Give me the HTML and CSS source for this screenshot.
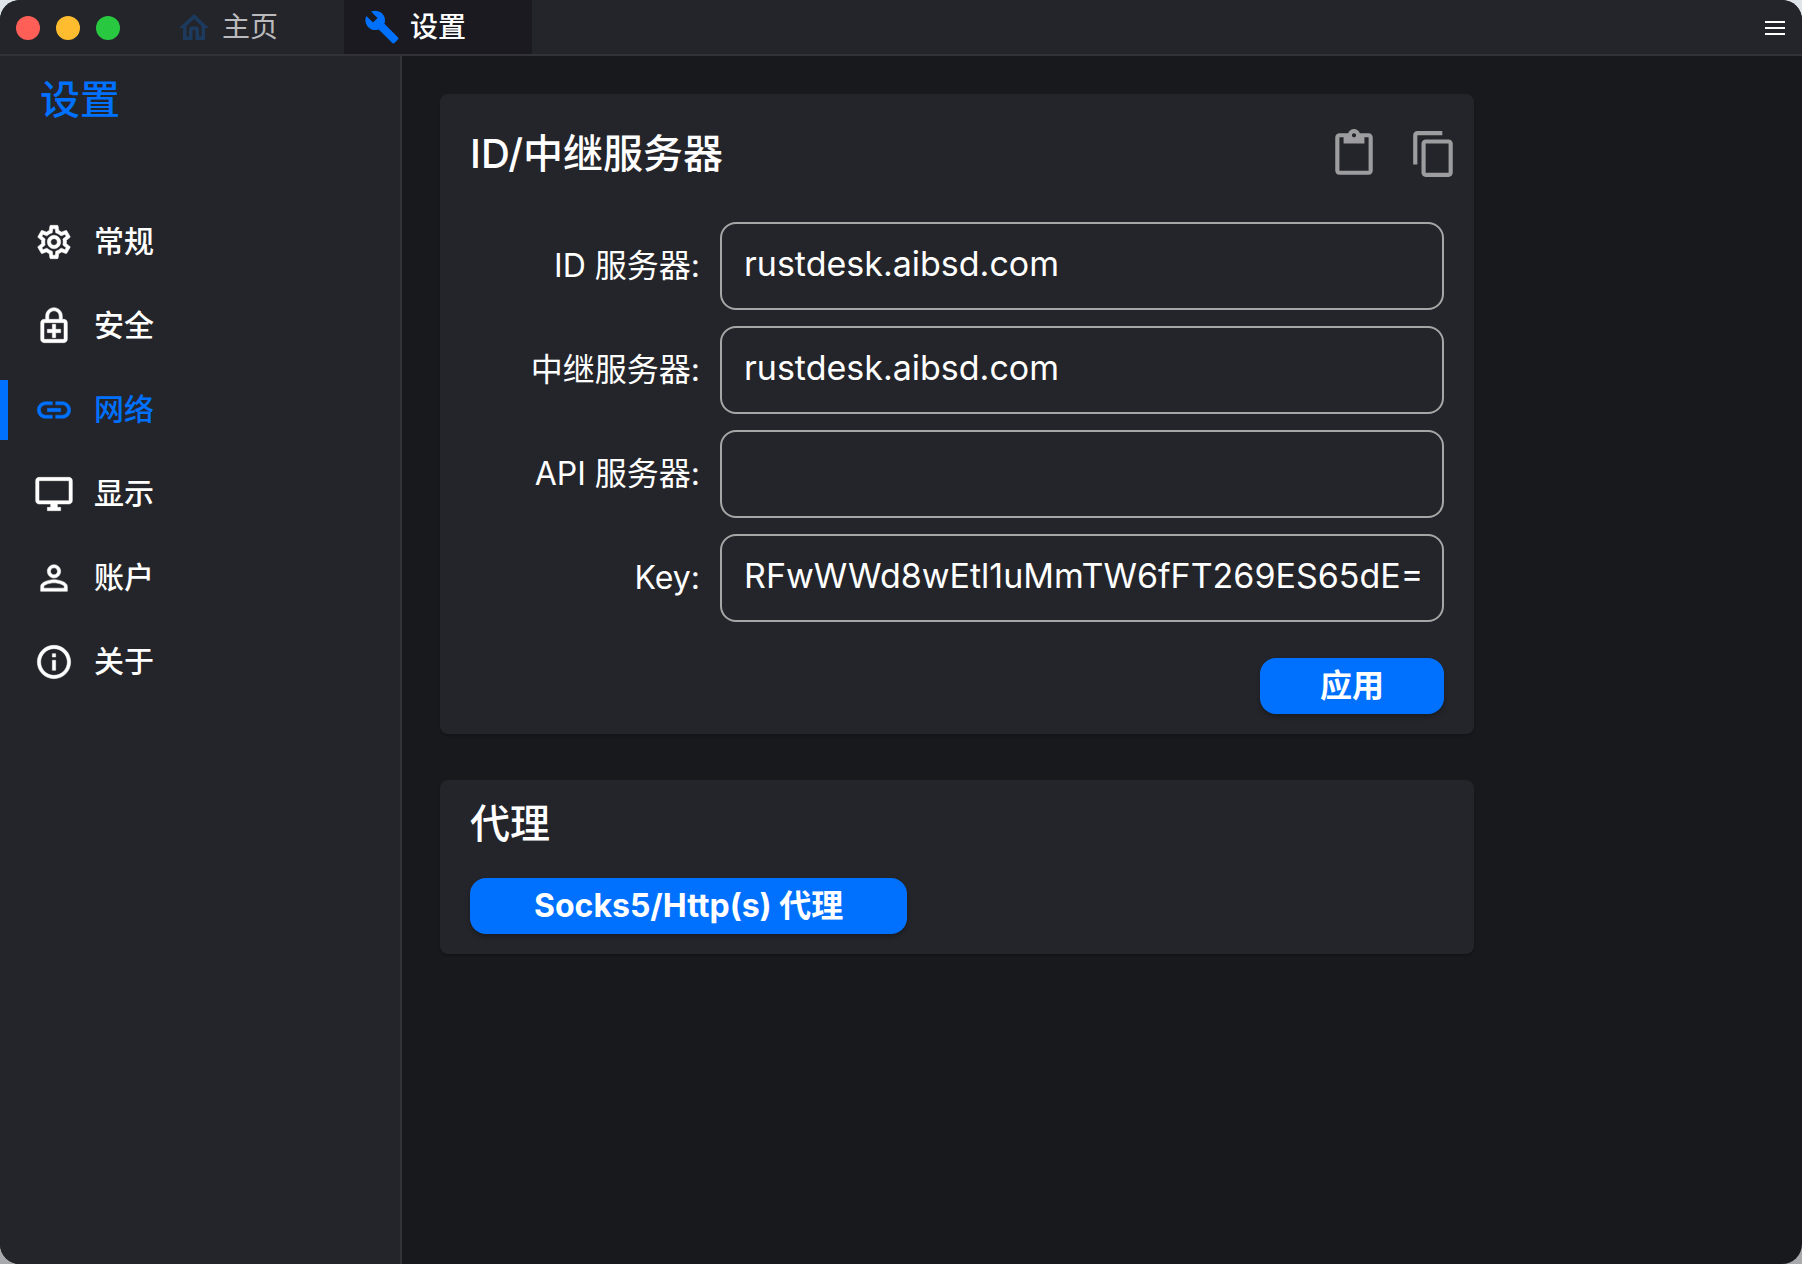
FILE: index.html
```
<!DOCTYPE html>
<html lang="zh-CN">
<head>
  <meta charset="UTF-8">
  <meta name="viewport" content="width=device-width, initial-scale=1">
  <title>设置</title>
  <link rel="stylesheet" href="styles.css">
</head>
<body>
  <div class="window">
    <header class="titlebar">
      <div class="lights">
        <button class="light close" aria-label="关闭"></button>
        <button class="light minimize" aria-label="最小化"></button>
        <button class="light zoom" aria-label="缩放"></button>
      </div>
      <nav class="tabs">
        <a class="tab tab-home" href="#home">
          <svg class="home-icon" viewBox="0 0 30 26"><path d="M15 0 30 14H26V26H16.500V16h-3V26H4V14H0ZM15 5 7.500 12V22.500H10V15.500a3 3 0 0 1 3-3h4a3 3 0 0 1 3 3V22.500H22.500V12Z"/></svg>
          主页
        </a>
        <a class="tab active" href="#settings">
          <svg class="wrench-icon" viewBox="0 0 24 24"><path d="M22.700 19l-9.100-9.100c.9-2.300.4-5-1.500-6.900-2-2-5-2.400-7.400-1.300L9 6 6 9 1.600 4.700C.4 7.100.9 10.100 2.900 12.100c1.900 1.900 4.600 2.400 6.900 1.500l9.100 9.100c.4.4 1 .4 1.400 0l2.300-2.300c.5-.4.5-1.100.1-1.400z"/></svg>
          设置
        </a>
      </nav>
      <button class="menu-btn" aria-label="菜单"><span></span><span></span><span></span></button>
    </header>

    <div class="content">
      <aside class="sidebar">
        <h1>设置</h1>
        <nav class="side-nav">
          <a class="nav-item" href="#general">
            <svg viewBox="0 0 24 24"><path d="M19.430 12.980c.04-.32.07-.64.07-.98 0-.34-.03-.66-.07-.98l2.110-1.650c.19-.15.24-.42.12-.64l-2-3.460c-.09-.16-.26-.25-.44-.25-.06 0-.12.01-.17.03l-2.490 1c-.52-.4-1.080-.73-1.690-.98l-.38-2.650C14.460 2.180 14.250 2 14 2h-4c-.25 0-.46.18-.49.42l-.38 2.650c-.61.25-1.170.59-1.690.98l-2.490-1c-.06-.02-.12-.03-.18-.03-.17 0-.34.09-.43.25l-2 3.460c-.13.22-.07.49.12.64l2.110 1.650c-.04.32-.07.65-.07.98 0 .33.03.66.07.98l-2.110 1.650c-.19.15-.24.42-.12.64l2 3.460c.09.16.26.25.44.25.06 0 .12-.01.17-.03l2.490-1c.52.4 1.080.73 1.690.98l.38 2.650c.03.24.24.42.49.42h4c.25 0 .46-.18.49-.42l.38-2.650c.61-.25 1.170-.59 1.690-.98l2.490 1c.06.02.12.03.18.03.17 0 .34-.09.43-.25l2-3.460c.12-.22.07-.49-.12-.64l-2.110-1.650zm-1.980-1.710c.04.31.05.52.05.73 0 .21-.02.43-.05.73l-.14 1.130.89.7 1.080.84-.7 1.210-1.270-.51-1.040-.42-.9.680c-.43.32-.84.56-1.250.73l-1.060.43-.16 1.130-.2 1.350h-1.400l-.19-1.350-.16-1.130-1.060-.43c-.43-.18-.83-.41-1.230-.71l-.91-.7-1.060.43-1.270.51-.7-1.210 1.080-.84.89-.7-.14-1.130c-.03-.31-.05-.54-.05-.74s.02-.43.05-.73l.14-1.130-.89-.7-1.080-.84.7-1.210 1.270.51 1.040.42.9-.68c.43-.32.84-.56 1.250-.73l1.060-.43.16-1.130.2-1.350h1.390l.19 1.350.16 1.130 1.060.43c.43.18.83.41 1.230.71l.91.7 1.060-.43 1.270-.51.7 1.210-1.070.85-.89.7.14 1.130zM12 8c-2.210 0-4 1.790-4 4s1.790 4 4 4 4-1.790 4-4-1.790-4-4-4zm0 6c-1.100 0-2-.9-2-2s.9-2 2-2 2 .9 2 2-.9 2-2 2z"/></svg>
            常规
          </a>
          <a class="nav-item" href="#security">
            <svg viewBox="0 0 24 24"><path d="M18 8h-1V6c0-2.760-2.240-5-5-5S7 3.240 7 6v2H6c-1.100 0-2 .9-2 2v10c0 1.100.9 2 2 2h12c1.100 0 2-.9 2-2V10c0-1.100-.9-2-2-2zM8.900 6c0-1.710 1.390-3.100 3.100-3.100s3.100 1.390 3.100 3.100v2H8.900V6zM18 20H6V10h12v10zM11 19h2v-3h3v-2h-3v-3h-2v3H8v2h3z"/></svg>
            安全
          </a>
          <a class="nav-item active" href="#network">
            <svg viewBox="0 0 24 24"><path d="M3.900 12c0-1.710 1.390-3.100 3.100-3.100h4V7H7c-2.760 0-5 2.240-5 5s2.240 5 5 5h4v-1.900H7c-1.710 0-3.100-1.390-3.100-3.100zM8 13h8v-2H8v2zm9-6h-4v1.900h4c1.710 0 3.100 1.390 3.100 3.100s-1.390 3.100-3.100 3.100h-4V17h4c2.760 0 5-2.240 5-5s-2.240-5-5-5z"/></svg>
            网络
          </a>
          <a class="nav-item" href="#display">
            <svg viewBox="0 0 24 24"><path d="M21 2H3c-1.100 0-2 .9-2 2v12c0 1.100.9 2 2 2h7v2H8v2h8v-2h-2v-2h7c1.100 0 2-.9 2-2V4c0-1.100-.9-2-2-2zm0 14H3V4h18v12z"/></svg>
            显示
          </a>
          <a class="nav-item" href="#account">
            <svg viewBox="0 0 24 24"><path d="M12 5.900c1.160 0 2.100.94 2.100 2.100s-.94 2.100-2.100 2.100S9.900 9.160 9.900 8s.94-2.100 2.100-2.100m0 9c2.970 0 6.100 1.460 6.100 2.100v1.100H5.900V17c0-.64 3.130-2.100 6.100-2.100M12 4C9.790 4 8 5.790 8 8s1.790 4 4 4 4-1.790 4-4-1.790-4-4-4zm0 9c-2.670 0-8 1.340-8 4v3h16v-3c0-2.660-5.330-4-8-4z"/></svg>
            账户
          </a>
          <a class="nav-item" href="#about">
            <svg viewBox="0 0 24 24"><path d="M11 7h2v2h-2zm0 4h2v6h-2zm1-9C6.480 2 2 6.480 2 12s4.480 10 10 10 10-4.480 10-10S17.520 2 12 2zm0 18c-4.410 0-8-3.590-8-8s3.590-8 8-8 8 3.590 8 8-3.590 8-8 8z"/></svg>
            关于
          </a>
        </nav>
      </aside>

      <main class="main">
        <section class="card">
          <div class="card-head">
            <h2>ID/中继服务器</h2>
            <div class="actions">
              <button class="icon-btn" aria-label="粘贴">
                <svg viewBox="0 0 24 24"><path d="M19 2h-4.180C14.400.84 13.300 0 12 0c-1.300 0-2.400.84-2.820 2H5c-1.100 0-2 .9-2 2v16c0 1.100.9 2 2 2h14c1.100 0 2-.9 2-2V4c0-1.100-.9-2-2-2zm-7 0c.55 0 1 .45 1 1s-.45 1-1 1-1-.45-1-1 .45-1 1-1zm7 18H5V4h2v3h10V4h2v16z"/></svg>
              </button>
              <button class="icon-btn" aria-label="复制">
                <svg viewBox="0 0 24 24"><path d="M16 1H4c-1.100 0-2 .9-2 2v14h2V3h12V1zm3 4H8c-1.100 0-2 .9-2 2v14c0 1.100.9 2 2 2h11c1.100 0 2-.9 2-2V7c0-1.100-.9-2-2-2zm0 16H8V7h11v14z"/></svg>
              </button>
            </div>
          </div>
          <form class="server-form">
            <label for="idServer">ID 服务器:</label>
            <input type="text" id="idServer" value="rustdesk.aibsd.com">
            <label for="relayServer">中继服务器:</label>
            <input type="text" id="relayServer" value="rustdesk.aibsd.com">
            <label for="apiServer">API 服务器:</label>
            <input type="text" id="apiServer">
            <label for="key">Key:</label>
            <input type="text" id="key" value="RFwWWd8wEtl1uMmTW6fFT269ES65dE=">
            <button type="button" class="btn apply">应用</button>
          </form>
        </section>

        <section class="card proxy">
          <h2>代理</h2>
          <button type="button" class="btn">Socks5/Http(s) 代理</button>
        </section>
      </main>
    </div>
  </div>
</body>
</html>
```

FILE: styles.css
```
* {
  box-sizing: border-box;
}
body {
  margin: 0;
  background: linear-gradient(#dfe4ea, #a8a9ab);
  color: #fff;
  font-family: Inter, "Noto Sans CJK SC", sans-serif;
  font-size: 32px;
  line-height: 1.25;
}
a {
  color: inherit;
  text-decoration: none;
}
button, input {
  font: inherit;
  color: inherit;
}
button {
  border: none;
  padding: 0;
  background: none;
  cursor: pointer;
}
svg {
  display: block;
  flex: none;
  fill: currentColor;
}
h1, h2 {
  margin: 0;
  font-size: 40px;
  line-height: 56px;
  font-weight: 500;
}
.window {
  display: flex;
  flex-direction: column;
  min-height: 100vh;
  border-radius: 20px;
  overflow: hidden;
  background: #18191d;
}

/* title bar */
.titlebar {
  display: flex;
  align-items: stretch;
  height: 56px;
  padding: 0 17px 0 16px;
  background: #24252a;
  border-bottom: 2px solid #323338;
}
.lights {
  display: flex;
  align-items: center;
  gap: 16px;
  padding-top: 2px;
}
.light {
  width: 24px;
  height: 24px;
  border-radius: 50%;
}
.close {
  background: #ff5f57;
}
.minimize {
  background: #febc2e;
}
.zoom {
  background: #28c840;
}
.tabs {
  display: flex;
  margin-left: 36px;
}
.tab {
  display: flex;
  align-items: center;
  width: 188px;
  padding-left: 20px;
  gap: 10px;
  font-size: 28px;
}
.tab-home {
  gap: 13px;
  padding-left: 23px;
  color: #bbbbbd;
}
.tab.active {
  background: #1b1a20;
  font-weight: 500;
}
.home-icon {
  width: 30px;
  height: 26px;
  fill: #1c3a5e;
}
.wrench-icon {
  width: 36px;
  height: 36px;
  fill: #0071ff;
}
.menu-btn {
  display: flex;
  flex-direction: column;
  justify-content: center;
  gap: 4px;
  margin-left: auto;
  padding-top: 2px;
}
.menu-btn span {
  width: 20px;
  height: 2px;
  background: #fff;
}

/* sidebar */
.content {
  display: flex;
  flex: 1;
}
.sidebar {
  flex: none;
  width: 402px;
  background: #24252a;
  border-right: 2px solid #323338;
}
.sidebar h1 {
  padding: 16px 40px 72px;
  color: #0071ff;
}
.nav-item {
  display: flex;
  align-items: center;
  height: 60px;
  margin: 12px 0 24px;
  padding-left: 26px;
  gap: 20px;
  border-left: 8px solid transparent;
  font-size: 30px;
  font-weight: 500;
}
.nav-item svg {
  width: 40px;
  height: 40px;
  stroke: currentColor;
  stroke-width: 0.3;
}
.nav-item.active {
  color: #0071ff;
  border-left-color: #0071ff;
}

/* settings */
.main {
  flex: 1;
  padding: 38px;
}
.card {
  max-width: 1034px;
  margin-bottom: 46px;
  padding: 32px 30px 20px;
  border-radius: 8px;
  background: #24252a;
  box-shadow: 0 2px 2px rgba(0, 0, 0, 0.2);
}
.card-head {
  display: flex;
  justify-content: space-between;
  margin-bottom: 40px;
}
.actions {
  display: flex;
  gap: 30px;
  margin-right: -15px;
}
.icon-btn {
  color: #9d9d9f;
}
.icon-btn svg {
  width: 50px;
  height: 50px;
}
.server-form {
  display: grid;
  grid-template-columns: 230px 1fr;
  align-items: center;
  column-gap: 20px;
  row-gap: 16px;
}
.server-form label {
  text-align: right;
}
.server-form input {
  width: 100%;
  height: 88px;
  padding: 0 22px 6px;
  border: 2px solid #a6a6a6;
  border-radius: 16px;
  background: none;
  font-size: 34px;
}
.btn {
  height: 56px;
  padding: 0 60px;
  border-radius: 16px;
  background: #0071ff;
  box-shadow: 0 3px 4px rgba(0, 0, 0, 0.25);
  font-weight: 700;
}
.apply {
  grid-column: 2;
  justify-self: end;
  margin-top: 20px;
}
.proxy {
  padding-top: 16px;
}
.proxy h2 {
  margin-bottom: 26px;
}
.proxy .btn {
  padding: 0 64px;
}
```
